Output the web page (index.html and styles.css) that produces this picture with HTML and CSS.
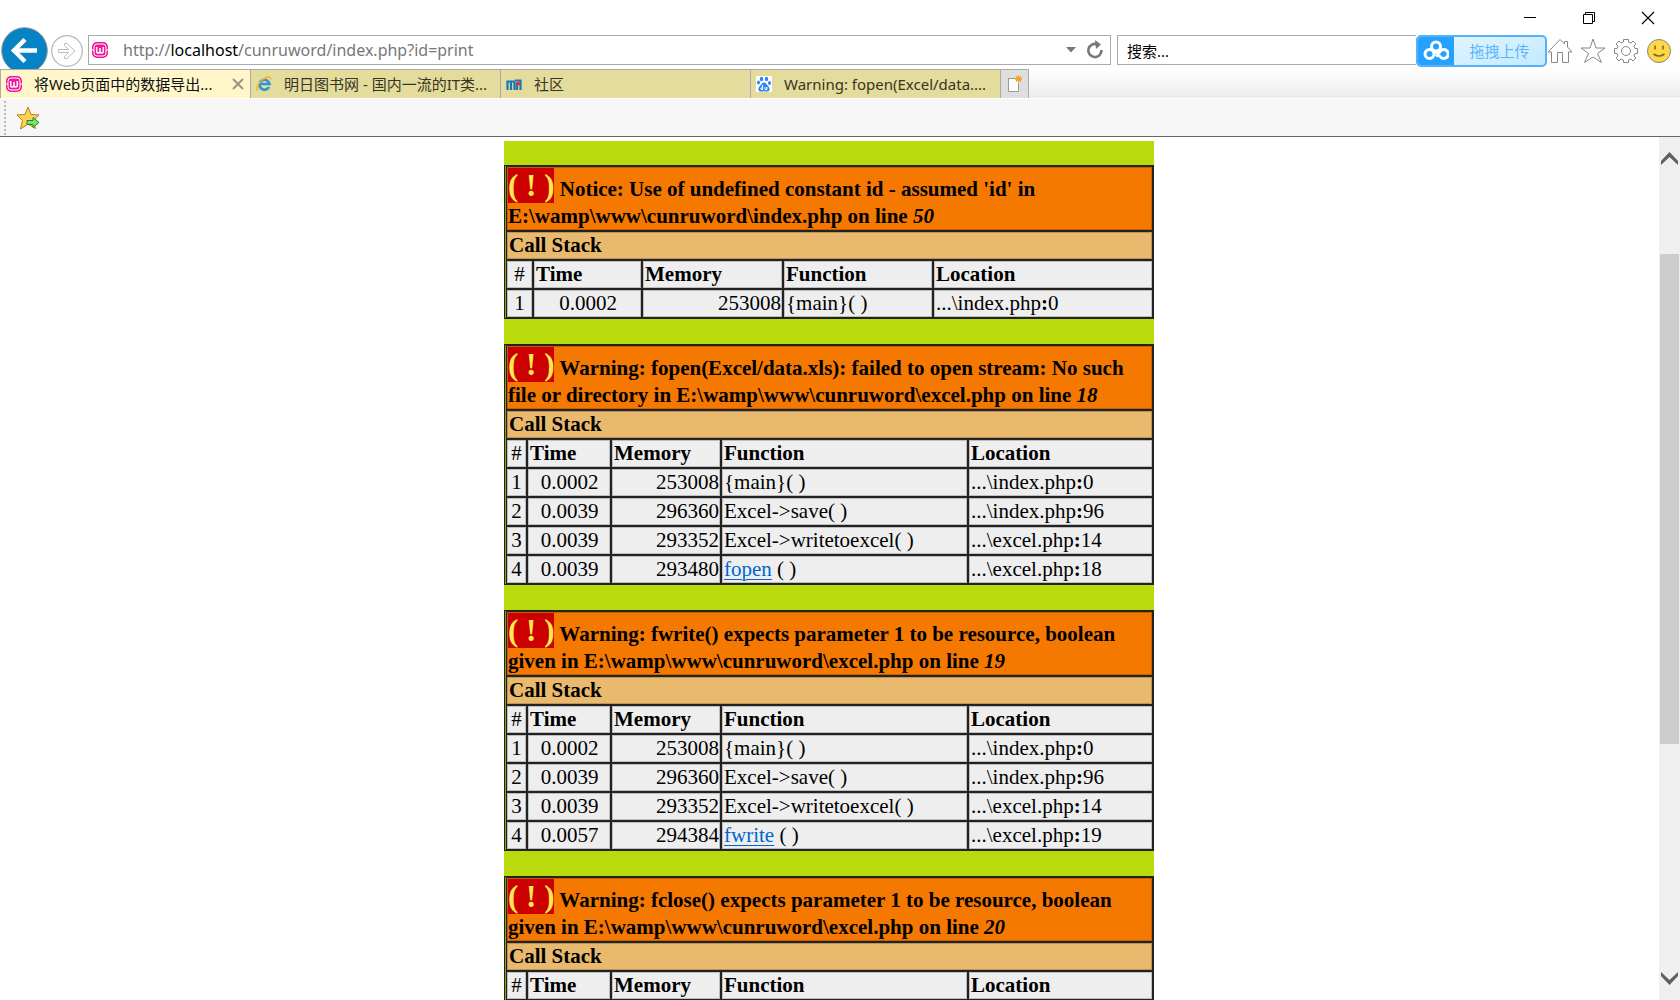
FILE: index.html
```html
<!DOCTYPE html>
<html lang="zh-CN">
<head>
<meta charset="utf-8">
<title>将Web页面中的数据导出</title>
<link rel="stylesheet" href="styles.css">
</head>
<body>
<svg class="defs" aria-hidden="true">
  <symbol id="wamp" viewBox="0 0 16 16">
    <rect width="16" height="16" rx="5" fill="#f0189a"/>
    <rect x="2" y="2" width="12" height="12" rx="3" fill="none" stroke="#fff" stroke-width="1"/>
    <path d="M4.7 5v4.2q0 1.8 1.7 1.8T8 9.2V6v3.2q0 1.8 1.7 1.8t1.6-1.8V5" fill="none" stroke="#fff" stroke-width="1.5"/>
    <path d="M0 8h2M14 8h2" stroke="#fff"/>
  </symbol>
</svg>
<header class="titlebar">
  <button class="win" aria-label="最小化"><svg width="14" height="14"><path d="M1 6.5h12" stroke="#000"/></svg></button>
  <button class="win" aria-label="还原"><svg width="14" height="14"><path d="M1.500 3.500h9v9h-9zM3.500 3V1.500h9v9H11" fill="none" stroke="#000"/></svg></button>
  <button class="win" aria-label="关闭"><svg width="14" height="14"><path d="M1 1l12 12M13 1L1 13" stroke="#000" stroke-width="1.200"/></svg></button>
</header>
<nav class="navbar">
  <button class="back" aria-label="后退"><svg width="48" height="48"><circle cx="24.500" cy="23.500" r="22.800" fill="#0583c5" stroke="#8d9194"/><path d="M37 23.500H15M25 12.500L14 23.500l11 11" fill="none" stroke="#fff" stroke-width="4.500"/></svg></button>
  <button class="fwd" aria-label="前进"><svg width="32" height="32"><circle cx="16" cy="16" r="15.300" fill="#fff" stroke="#b5b5b5" stroke-width="1.200"/><path d="M7.500 14.500h10l-4-4v-2h2.500l8 7.500-8 7.500h-2.500v-2l4-4h-10z" fill="none" stroke="#bbb"/></svg></button>
  <div class="address">
    <svg width="16" height="16"><use href="#wamp"/></svg>
    <a class="url" href="#">http://<b>localhost</b>/cunruword/index.php?id=print</a>
    <button aria-label="历史"><svg width="10" height="6"><path d="M0 0h10L5 5.500z" fill="#777"/></svg></button>
    <button aria-label="刷新"><svg width="18" height="20"><path d="M11.500 4.400A6.600 6.600 0 1 0 15.500 10" fill="none" stroke="#777" stroke-width="2.600"/><path d="M9 0l6 4.500-5 4.500z" fill="#777"/></svg></button>
  </div>
  <input class="search" type="text" aria-label="搜索" value="搜索...">
  <button class="upload"><span class="cloud"><svg width="26" height="22" fill="none" stroke="#fff" stroke-width="3"><circle cx="13" cy="6.500" r="4.500"/><circle cx="6.500" cy="14" r="4.500"/><path d="M12 11.500l5 5a4.500 4.500 0 1 0 0-5l-4 5"/></svg></span><span class="uptext">拖拽上传</span></button>
  <div class="tools">
    <button aria-label="主页"><svg width="26" height="26"><path d="M1 14L13 1.500l4.500 4.500V3.500h3v5.500L25 14h-3.500v10.500h-6V14.500h-5v10h-6V14z" fill="none" stroke="#888"/></svg></button>
    <button aria-label="收藏夹"><svg width="26" height="26"><path d="M13 1l3 9h9l-7.500 5.500 4 9L13 19l-8.500 5.500 4-9L1 10h9z" fill="none" stroke="#888"/></svg></button>
    <button aria-label="工具"><svg width="26" height="26" fill="none" stroke="#888"><path d="M10.500 4V1.500h5V4l2.500 1 2-2 3 3-2 2 1 2.500h2.500v5H22l-1 2.500 2 2-3 3-2-2-2.500 1v2.500h-5V22L8 21l-2 2-3-3 2-2-1-2.500H1.500v-5H4L5 8 3 6l3-3 2 2z"/><circle cx="13" cy="13" r="4.500"/></svg></button>
    <button aria-label="反馈"><svg width="26" height="26"><circle cx="13" cy="13" r="11.500" fill="#ffd84a" stroke="#858585"/><path d="M9 7.500v4M17 7.500v4M7.500 16q5.500 4 11 0" fill="none" stroke="#806a20" stroke-width="1.600"/></svg></button>
  </div>
</nav>
<nav class="tabs">
  <a class="tab active" href="#"><svg width="16" height="16"><use href="#wamp"/></svg><span>将Web页面中的数据导出...</span><svg class="close" width="12" height="12"><path d="M1 1l10 10M11 1L1 11" stroke="#999688" stroke-width="2"/></svg></a>
  <a class="tab" href="#"><svg width="16" height="16" fill="none"><path d="M13 11A5 5 0 1 1 13.500 8H4" stroke="#2c96d6" stroke-width="2.600"/><path d="M2 14.500C-1 12 4 4 10 1.500q5-2 4.500 2" stroke="#eeb32c" stroke-width="1.500"/></svg><span>明日图书网 - 国内一流的IT类...</span></a>
  <a class="tab" href="#"><svg width="16" height="16"><path d="M1.500 14V5.500h7V14M5 5v9M11 14V7M14.500 14V4.500H9" fill="none" stroke="#1678b5" stroke-width="2.200"/><circle cx="12" cy="7.500" r="2" fill="#e03030"/></svg><span>社区</span></a>
  <a class="tab" href="#"><svg width="16" height="16"><path fill="#fff" d="M0 0h16v16H0z"/><g fill="#2f84f0"><ellipse cx="5.500" cy="3" rx="1.700" ry="2.300"/><ellipse cx="10.500" cy="3" rx="1.700" ry="2.300"/><ellipse cx="2.500" cy="6.500" rx="1.500" ry="2.100"/><ellipse cx="13.500" cy="7" rx="1.500" ry="2.100"/><path d="M8 6.500c2 0 2.500 2 4 3.500 3 3 1.500 6-1.500 5.500q-2.500-.5-5 0C2.500 16 1 13 4 10 5.500 8.500 6 6.500 8 6.500z"/></g><path d="M6.500 9v4.500H5q-1-1.500 1.500-2M9 11v2.500h2V11" stroke="#fff" fill="none"/></svg><span>Warning: fopen(Excel/data....</span></a>
  <button class="newtab" aria-label="新建标签页"><svg width="16" height="18"><path d="M2 3.500h10v13H2z" fill="#fff"/><path d="M1.500 3v13.500h10V8M1.500 3.500h7" fill="none" stroke="#999"/><path d="M11.500 .5v7M8 4h7M9 1.500l5 5M14 1.500l-5 5" stroke="#f2a21b" stroke-width="1.300"/></svg></button>
</nav>
<div class="favbar">
  <span class="grip"></span>
  <button aria-label="添加到收藏夹栏"><svg width="24" height="24"><path d="M12 1l3 7.500 8 .5-6 5.500 2.500 8L12 18l-7.500 5 2-8.500L1 9l8-.5z" fill="#ffd257" stroke="#b98212" stroke-linejoin="round"/><path d="M11 14.500h6v-3l6 5-6 5v-3h-6z" fill="#7fe06b" stroke="#198d2a"/></svg></button>
</div>
<div class="viewport">
  <main class="page">
    <div class="column">
      <table class="trace short">
        <colgroup><col class="n"><col class="t"><col class="m"><col class="f"><col></colgroup>
        <tr><th class="error" colspan="5"><span class="bang">( ! )</span> Notice: Use of undefined constant id - assumed 'id' in E:\wamp\www\cunruword\index.php on line <i>50</i></th></tr>
        <tr><th class="stack" colspan="5">Call Stack</th></tr>
        <tr><th class="num">#</th><th>Time</th><th>Memory</th><th>Function</th><th>Location</th></tr>
        <tr><td>1</td><td>0.0002</td><td>253008</td><td>{main}( )</td><td>...\index.php<b>:</b>0</td></tr>
      </table>
      <table class="trace">
        <colgroup><col class="n"><col class="t"><col class="m"><col class="f"><col></colgroup>
        <tr><th class="error" colspan="5"><span class="bang">( ! )</span> Warning: fopen(Excel/data.xls): failed to open stream: No such file or directory in E:\wamp\www\cunruword\excel.php on line <i>18</i></th></tr>
        <tr><th class="stack" colspan="5">Call Stack</th></tr>
        <tr><th class="num">#</th><th>Time</th><th>Memory</th><th>Function</th><th>Location</th></tr>
        <tr><td>1</td><td>0.0002</td><td>253008</td><td>{main}( )</td><td>...\index.php<b>:</b>0</td></tr>
        <tr><td>2</td><td>0.0039</td><td>296360</td><td>Excel-&gt;save( )</td><td>...\index.php<b>:</b>96</td></tr>
        <tr><td>3</td><td>0.0039</td><td>293352</td><td>Excel-&gt;writetoexcel( )</td><td>...\excel.php<b>:</b>14</td></tr>
        <tr><td>4</td><td>0.0039</td><td>293480</td><td><a href="#">fopen</a> ( )</td><td>...\excel.php<b>:</b>18</td></tr>
      </table>
      <table class="trace">
        <colgroup><col class="n"><col class="t"><col class="m"><col class="f"><col></colgroup>
        <tr><th class="error" colspan="5"><span class="bang">( ! )</span> Warning: fwrite() expects parameter 1 to be resource, boolean given in E:\wamp\www\cunruword\excel.php on line <i>19</i></th></tr>
        <tr><th class="stack" colspan="5">Call Stack</th></tr>
        <tr><th class="num">#</th><th>Time</th><th>Memory</th><th>Function</th><th>Location</th></tr>
        <tr><td>1</td><td>0.0002</td><td>253008</td><td>{main}( )</td><td>...\index.php<b>:</b>0</td></tr>
        <tr><td>2</td><td>0.0039</td><td>296360</td><td>Excel-&gt;save( )</td><td>...\index.php<b>:</b>96</td></tr>
        <tr><td>3</td><td>0.0039</td><td>293352</td><td>Excel-&gt;writetoexcel( )</td><td>...\excel.php<b>:</b>14</td></tr>
        <tr><td>4</td><td>0.0057</td><td>294384</td><td><a href="#">fwrite</a> ( )</td><td>...\excel.php<b>:</b>19</td></tr>
      </table>
      <table class="trace">
        <colgroup><col class="n"><col class="t"><col class="m"><col class="f"><col></colgroup>
        <tr><th class="error" colspan="5"><span class="bang">( ! )</span> Warning: fclose() expects parameter 1 to be resource, boolean given in E:\wamp\www\cunruword\excel.php on line <i>20</i></th></tr>
        <tr><th class="stack" colspan="5">Call Stack</th></tr>
        <tr><th class="num">#</th><th>Time</th><th>Memory</th><th>Function</th><th>Location</th></tr>
      </table>
    </div>
  </main>
  <div class="scrollbar">
    <button aria-label="向上滚动"><svg width="17" height="13"><path d="M0 9L8.500 0 17 9v4L8.500 5 0 13z" fill="#5f5f5f"/></svg></button>
    <div class="track"><div class="thumb"></div></div>
    <button aria-label="向下滚动"><svg width="17" height="13"><path d="M0 4l8.500 9L17 4V0L8.500 8 0 0z" fill="#5f5f5f"/></svg></button>
  </div>
</div>
</body>
</html>
```
FILE: styles.css
```css
* { box-sizing: border-box; }
body {
  margin: 0;
  height: 100vh;
  overflow: hidden;
  display: flex;
  flex-direction: column;
  background: #fff;
  font: 15px/20px "Noto Sans", "Noto Sans CJK SC", sans-serif;
}
button {
  display: flex;
  align-items: center;
  justify-content: center;
  padding: 0;
  border: 0;
  background: none;
  font: inherit;
}
svg { display: block; flex: none; }
.defs { position: absolute; width: 0; height: 0; }

.titlebar {
  flex: none;
  height: 27px;
  display: flex;
  justify-content: flex-end;
  align-items: flex-end;
  padding: 0 3px 2px 0;
}
.win { width: 59px; height: 14px; }

.navbar {
  flex: none;
  height: 42px;
  display: flex;
  align-items: center;
  overflow: hidden;
}
.back { height: 42px; align-items: flex-start; }
.fwd { margin: 5px 5px 0 3px; }
.address {
  flex: 1;
  height: 30px;
  display: flex;
  align-items: center;
  border: 1px solid #aaa;
  padding: 0 6px 0 3px;
  margin-top: 4px;
}
.url {
  flex: 1;
  margin-left: 15px;
  font-size: 16px;
  color: #777;
  text-decoration: none;
}
.url b { font-weight: 400; color: #000; }
.address button + button { margin-left: 10px; }
.search {
  width: 299px;
  height: 30px;
  margin: 4px 0 0 6px;
  padding: 0 9px;
  border: 1px solid #aaa;
  border-right: 0;
  border-radius: 0;
  font: inherit;
  color: #000;
}
.upload {
  width: 131px;
  height: 32px;
  margin-top: 5px;
  border: 2px solid #55b1fd;
  border-radius: 5px;
  background: linear-gradient(160deg, #e6f7ff, #c2eaff);
  color: #5eb5fa;
  overflow: hidden;
}
.cloud {
  width: 36px;
  height: 28px;
  display: flex;
  align-items: center;
  justify-content: center;
  background: #24a2fd;
}
.uptext { flex: 1; }
.tools {
  display: flex;
  gap: 7px;
  margin-top: 6px;
  padding-right: 8px;
}

.tabs {
  flex: none;
  height: 30px;
  display: flex;
  border-bottom: 1px solid #fff;
  background: linear-gradient(#fff, #ececec);
}
.tab {
  width: 250px;
  display: flex;
  align-items: center;
  padding: 0 6px 0 5px;
  border: 1px solid #aaa;
  border-width: 1px 0 0 1px;
  background: #e4dc9c;
  color: #36351f;
  white-space: nowrap;
  text-decoration: none;
}
.tab span { flex: 1; margin-left: 12px; }
.tab.active { background: #fff7c9; color: #111; }
.newtab {
  width: 29px;
  border: 1px solid #aaa;
  border-bottom: 0;
  background: #dedede;
}

.favbar {
  flex: none;
  height: 38px;
  display: flex;
  align-items: center;
  gap: 10px;
  padding-left: 4px;
  border-bottom: 1px solid #666;
  background: #f6f6f6;
}
.grip { height: 34px; border-left: 2px dotted #bbb; }

.viewport { flex: 1; min-height: 0; display: flex; }
.page {
  flex: 1;
  overflow: hidden;
  padding: 4px 1px 0 0;
  font: 21px/25px "Liberation Serif", serif;
  color: #000;
}
.column {
  width: 650px;
  margin: 0 auto;
  padding-top: 24px;
  display: flex;
  flex-direction: column;
  gap: 25px;
  background: #b9db0c;
}
.trace {
  width: 100%;
  table-layout: fixed;
  border-collapse: separate;
  border-spacing: 0;
  border: 1px solid #222;
  padding-left: 1px;
  background: #8ba313;
}
.n { width: 21px; }
.t { width: 84px; }
.m { width: 110px; }
.f { width: 247px; }
.short .n { width: 27px; }
.short .t { width: 109px; }
.short .m { width: 141px; }
.short .f { width: 150px; }
.trace th, .trace td {
  padding: 1px 1px 1px 2px;
  border: 1px solid #222;
  background: #eee;
  box-shadow: inset 0 0 0 1px rgba(0, 0, 0, .2);
  text-align: left;
}
.trace .error { padding: 1px; background: #f57900; }
.trace .stack { background: #e9b96e; }
.trace .num { font-weight: 400; text-align: center; }
.trace td:nth-child(1), .trace .num { padding: 1px; }
.trace td:nth-child(1), .trace td:nth-child(2) { text-align: center; }
.trace td:nth-child(3) { text-align: right; }
.trace a { color: #0066cc; text-underline-offset: 3px; text-decoration-thickness: 1px; }
.bang {
  background: #c00;
  color: #fce94f;
  font-size: 31px;
  line-height: 36px;
}

.scrollbar {
  width: 21px;
  display: flex;
  flex-direction: column;
  background: #efefef;
}
.scrollbar button { height: 43px; }
.track { flex: 1; padding: 74px 1px 0; }
.thumb { height: calc(70% - 2px); background: #cdcdcd; }
```
